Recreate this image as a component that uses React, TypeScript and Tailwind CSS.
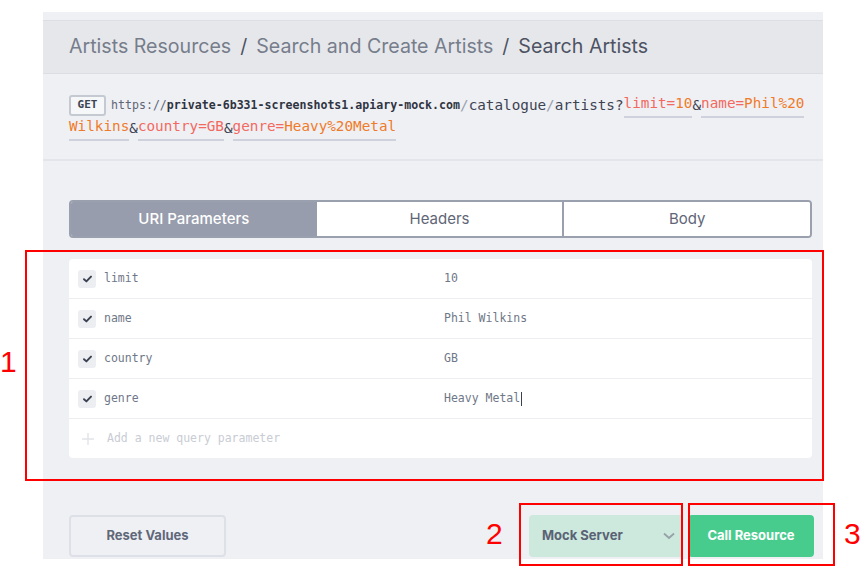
import React from "react";

const mono = { fontFamily: '"DejaVu Sans Mono", "Liberation Mono", monospace' };

function Check() {
  return (
    <div className="w-[18px] h-[18px] shrink-0 rounded-[3px] bg-[#eceef2] flex items-center justify-center">
      <svg width="9" height="8" viewBox="0 0 9 8">
        <path d="M1 4.2 L3.4 6.4 L8 1.6" stroke="#3a4050" strokeWidth="1.9" fill="none" strokeLinecap="round" strokeLinejoin="round" />
      </svg>
    </div>
  );
}

function Row({ name, value, cursor }: { name: string; value: string; cursor?: boolean }) {
  return (
    <div className="h-[40px] flex items-center border-b border-[#eceef1] pl-[9px]">
      <Check />
      <div className="w-[348px] shrink-0 pl-[8px] text-[11.5px] text-[#6f7788]" style={mono}>{name}</div>
      <div className="text-[11.5px] text-[#6f7788] flex items-center" style={mono}>
        {value}
        {cursor && <span className="inline-block w-[1px] h-[14px] bg-[#3a4050] ml-[1px]" />}
      </div>
    </div>
  );
}

export default function App() {
  const kv = "text-[#f3695f]";
  const vv = "text-[#ef7b2a]";
  const ul = "border-b-2 border-[#cfd1dd] pb-[1px]";
  return (
    <div className="relative w-[866px] h-[579px] bg-white overflow-hidden" style={{ fontFamily: 'Inter, "Noto Sans", sans-serif' }}>
      <div className="ml-[43px] mt-[12px] w-[780px] h-[547px] bg-[#eff0f4] flex flex-col">
        <div className="h-[8px]" />
        <div className="h-[54px] bg-[#e6e7eb] border-y border-[#dcdee3] px-[26px] flex items-center text-[19.6px] text-[#767d8b] whitespace-nowrap">
          <span>Artists Resources</span>
          <span className="mx-[9px] text-[#4d5363]">/</span>
          <span>Search and Create Artists</span>
          <span className="mx-[9px] text-[#4d5363]">/</span>
          <span className="text-[#4d5363]">Search Artists</span>
        </div>
        <div className="h-[87px] border-b-2 border-[#e3e5ea] px-[26px] pt-[20px]">
          <div className="flex items-center h-[23px] whitespace-nowrap" style={mono}>
            <span className="shrink-0 h-[21px] w-[37px] border-2 border-[#c5c9d2] rounded-[3px] bg-[#f6f7f9] text-[11px] font-bold text-[#3d4352] flex items-center justify-center mr-[5px]">GET</span>
            <span className="text-[11.6px] text-[#5e6576]">https://</span>
            <span className="text-[11.6px] font-bold text-[#2f3442]">private-6b331-screenshots1.apiary-mock.com</span>
            <span className="text-[14.3px] text-[#3d4352]"><span className="text-[#9aa0ad]">/</span>catalogue<span className="text-[#9aa0ad]">/</span>artists?</span>
            <span className={`text-[14.3px] ${ul}`}><span className={kv}>limit=</span><span className={vv}>10</span></span>
            <span className="text-[14.3px] text-[#3d4352]">&amp;</span>
            <span className={`text-[14.3px] ${ul}`}><span className={kv}>name=</span><span className={vv}>Phil%20</span></span>
          </div>
          <div className="flex items-center h-[23px] whitespace-nowrap text-[14.3px]" style={mono}>
            <span className={`${ul} ${vv}`}>Wilkins</span>
            <span className="text-[#3d4352]">&amp;</span>
            <span className={ul}><span className={kv}>country=GB</span></span>
            <span className="text-[#3d4352]">&amp;</span>
            <span className={ul}><span className={kv}>genre=</span><span className={vv}>Heavy%20Metal</span></span>
          </div>
        </div>
        <div className="pl-[26px] pr-[11px] pt-[39px]">
          <div className="h-[38px] flex rounded-[4px] border-2 border-[#9aa0ae] overflow-hidden text-[15px]">
            <div className="flex-1 bg-[#979dad] text-white flex items-center justify-center font-medium">URI Parameters</div>
            <div className="flex-1 bg-white text-[#5f6677] flex items-center justify-center border-r-2 border-[#9aa0ae]">Headers</div>
            <div className="flex-1 bg-white text-[#5f6677] flex items-center justify-center">Body</div>
          </div>
          <div className="mt-[21px] h-[199px] bg-white rounded-[4px] flex flex-col">
            <Row name="limit" value="10" />
            <Row name="name" value="Phil Wilkins" />
            <Row name="country" value="GB" />
            <Row name="genre" value="Heavy Metal" cursor />
            <div className="h-[39px] flex items-center pl-[13px]">
              <svg width="12" height="12" viewBox="0 0 12 12">
                <path d="M6 0 V12 M0 6 H12" stroke="#e1e3e8" strokeWidth="1.4" />
              </svg>
              <span className="ml-[13px] text-[11.5px] text-[#c9ccd4]" style={mono}>Add a new query parameter</span>
            </div>
          </div>
          <div className="mt-[57px] flex items-center">
            <div className="w-[157px] h-[42px] border-2 border-[#dde0e6] rounded-[4px] flex items-center justify-center text-[13px] font-bold text-[#5f6779]">Reset Values</div>
            <div className="flex-1" />
            <div className="w-[153px] h-[42px] bg-[#cde8dc] rounded-l-[4px] flex items-center pl-[13px] pr-[7px] text-[13px] font-bold text-[#5a6275]">
              <span className="flex-1">Mock Server</span>
              <svg width="12" height="8" viewBox="0 0 12 8">
                <path d="M1 1.5 L6 6 L11 1.5" stroke="#97a2a8" strokeWidth="1.8" fill="none" />
              </svg>
            </div>
            <div className="ml-[6px] w-[126px] h-[42px] bg-[#48cc8e] rounded-[4px] flex items-center justify-center text-[13px] font-bold text-white mr-[-2px]">Call Resource</div>
          </div>
        </div>
      </div>

      {/* annotation overlays */}
      <div className="absolute left-[25px] top-[250px] w-[799px] h-[231px] border-2 border-[#ff0000]" />
      <div className="absolute left-[519px] top-[503px] w-[164px] h-[63px] border-2 border-[#ff0000]" />
      <div className="absolute left-[688px] top-[503px] w-[147px] h-[63px] border-2 border-[#ff0000]" />
      <div className="absolute left-[0px] top-[347px] text-[30px] leading-none text-[#ff0000]" style={{ fontFamily: '"Liberation Sans", Arial, sans-serif' }}>1</div>
      <div className="absolute left-[486px] top-[519px] text-[30px] leading-none text-[#ff0000]" style={{ fontFamily: '"Liberation Sans", Arial, sans-serif' }}>2</div>
      <div className="absolute left-[844px] top-[519px] text-[30px] leading-none text-[#ff0000]" style={{ fontFamily: '"Liberation Sans", Arial, sans-serif' }}>3</div>
    </div>
  );
}
